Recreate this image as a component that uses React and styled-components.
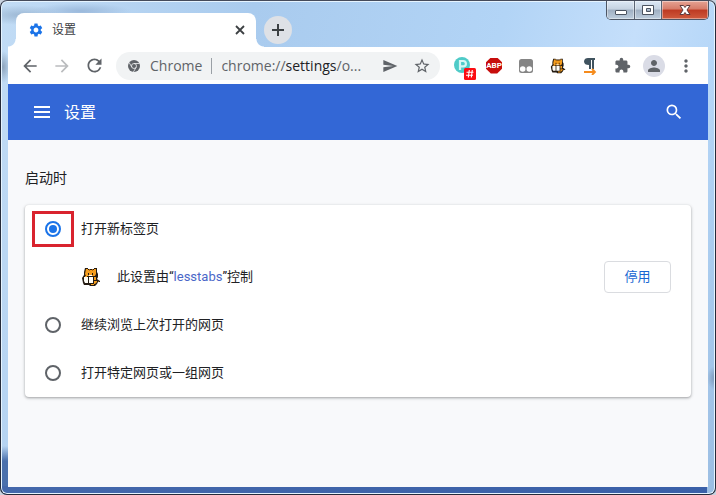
import React from 'react';
import styled, { createGlobalStyle } from 'styled-components';
import {
  MdArrowBack,
  MdArrowForward,
  MdExtension,
  MdMoreVert,
  MdPerson,
  MdRefresh,
  MdSearch,
  MdSend,
  MdSettings,
  MdStarBorder,
} from 'react-icons/md';

const uiFont = '"Roboto", "Noto Sans CJK SC", sans-serif';

const GlobalStyle = createGlobalStyle`
  *, *::before, *::after { box-sizing: border-box; }
  body { margin: 0; background: #c9d3e0; font-family: ${uiFont}; color: #202124; }
  button, input { font: inherit; margin: 0; }
  button { border: 0; padding: 0; background: none; color: inherit; }
  svg { display: block; flex: none; }
`;

const Frame = styled.div`
  position: relative;
  display: flex;
  flex-direction: column;
  min-height: 100vh;
  padding: 0 7px 7px 7px;
  border: 1px solid #252b3a;
  border-top-color: #454b5b;
  border-radius: 7px;
  box-shadow: inset 0 0 0 1px #e6f4ff;
  background:
    radial-gradient(ellipse 40px 10px at 20px 14px, #9db8d4 0%, transparent 100%),
    radial-gradient(ellipse 50px 8px at 80px 10px, #9bb9db 0%, transparent 100%),
    radial-gradient(ellipse 8px 16px at 2px 66px, #8fa5bd 0%, transparent 100%),
    radial-gradient(ellipse 8px 12px at 100% 377px, #7c97b8 0%, transparent 100%),
    linear-gradient(90deg, #4468ab, #3a60a8) 0 100% / calc(100% - 8px) 8px no-repeat,
    linear-gradient(180deg, transparent 0 445px, #4a70ac 460px) 0 0 / 8px 100% no-repeat,
    linear-gradient(105deg, #c2dcf5 0%, #a9cbee 30%, #b2d4f6 60%, #c5dffb 76%, #b6d7f8 86%, #9abde2 100%);
`;

const TabStrip = styled.div`
  display: flex;
  align-items: flex-end;
  height: 46px;
  padding: 0 8px;
`;

const Tab = styled.div`
  position: relative;
  display: flex;
  align-items: center;
  width: 240px;
  height: 34px;
  padding: 0 10px 0 12px;
  border-radius: 8px 8px 0 0;
  background: #fff;
  font-size: 12px;
  color: #3c4043;

  &::before, &::after {
    content: '';
    position: absolute;
    bottom: 0;
    width: 8px;
    height: 8px;
  }
  &::before {
    left: -8px;
    background: radial-gradient(circle at 0 0, transparent 7px, #fff 8px);
  }
  &::after {
    right: -8px;
    background: radial-gradient(circle at 100% 0, transparent 7px, #fff 8px);
  }
`;

const TabTitle = styled.span`
  flex: 1;
  padding-left: 8px;
  line-height: 18px;
`;

const IconButton = styled.button`
  display: flex;
  align-items: center;
  justify-content: center;
  flex: none;
  width: ${({ $size }) => $size || 32}px;
  height: ${({ $size }) => $size || 32}px;
  color: ${({ $color }) => $color || '#5f6368'};
`;

const NewTab = styled(IconButton)`
  margin: 0 0 3px 8px;
  border-radius: 50%;
  background: #dee1e6;
`;

const Caption = styled.div`
  position: absolute;
  top: 0;
  right: 6px;
  display: flex;
  border: 1px solid #4d5665;
  border-top: 0;
  border-radius: 0 0 5px 5px;
  overflow: hidden;
`;

const CaptionButton = styled.button`
  display: flex;
  align-items: center;
  justify-content: center;
  width: ${({ $close }) => ($close ? 47 : 27)}px;
  height: 18px;
  background: ${({ $close }) =>
    $close
      ? 'linear-gradient(#e5a394 0%, #d67b68 45%, #bd3a22 50%, #cf5a3d 100%)'
      : 'linear-gradient(#dce8f5 0%, #c5d2e1 45%, #9fafc2 50%, #bdcddd 100%)'};
  box-shadow: inset 0 0 0 1px #ffffff66;

  & + & { border-left: 1px solid #5a6474; }
`;

const Toolbar = styled.div`
  display: flex;
  align-items: center;
  height: 37px;
  padding: 0 6px;
  background: #fff;
`;

const Omnibox = styled.div`
  display: flex;
  align-items: center;
  flex: 1;
  min-width: 0;
  height: 28px;
  margin: 0 6px;
  padding: 0 2px 0 12px;
  border-radius: 14px;
  background: #f1f3f4;
  font-family: "Open Sans", "Noto Sans", sans-serif;
  font-size: 14px;
  line-height: 20px;
  color: #5f6368;
`;

const SiteName = styled.span`
  padding: 0 9px 0 10px;
`;

const Address = styled.span`
  flex: 1;
  min-width: 0;
  padding-left: 9px;
  border-left: 1px solid #9aa0a6;
  line-height: 16px;
  white-space: nowrap;

  b { font-weight: 400; color: #202124; }
`;

const Avatar = styled.span`
  display: flex;
  align-items: center;
  justify-content: center;
  width: 22px;
  height: 22px;
  border-radius: 50%;
  background: #dadce6;
`;

const Page = styled.div`
  flex: 1;
  display: flex;
  flex-direction: column;
  background: #f8f9fb;
`;

const Header = styled.header`
  display: flex;
  align-items: center;
  height: 56px;
  padding: 0 18px;
  background: #3367d6;
  color: #fff;
`;

const HeaderTitle = styled.h1`
  flex: 1;
  margin: 0;
  padding: 2px 0 0 6px;
  font-size: 16px;
  font-weight: 400;
  line-height: 24px;
`;

const Main = styled.main`
  padding: 28px 17px;
`;

const SectionTitle = styled.h2`
  margin: 0 0 17px;
  font-size: 14px;
  font-weight: 400;
  line-height: 20px;
`;

const Card = styled.section`
  border-radius: 4px;
  background: #fff;
  box-shadow: 0 1px 2px #3c40434d, 0 1px 3px 1px #3c404326;
  font-size: 13px;
  line-height: 20px;
`;

const Option = styled.label`
  position: relative;
  display: flex;
  align-items: center;
  gap: 20px;
  height: 48px;
  padding: 0 20px;
`;

const Radio = styled.input`
  appearance: none;
  display: grid;
  place-items: center;
  width: 16px;
  height: 16px;
  border: 2px solid #5f6368;
  border-radius: 50%;

  &:checked { border-color: #1a73e8; }
  &:checked::after {
    content: '';
    width: 8px;
    height: 8px;
    border-radius: 50%;
    background: #1a73e8;
  }
`;

const Highlight = styled.span`
  position: absolute;
  top: 6px;
  left: 7px;
  width: 42px;
  height: 36px;
  border: 3px solid #d9232e;
  pointer-events: none;
`;

const ControlledRow = styled.div`
  display: flex;
  align-items: center;
  gap: 16px;
  height: 48px;
  padding: 0 20px 0 56px;

  p { flex: 1; margin: 0; }
  a { color: #4a67c8; text-decoration: none; }
`;

const DisableButton = styled.button`
  min-width: 67px;
  height: 32px;
  padding: 0 16px;
  border: 1px solid #dadce0;
  border-radius: 4px;
  background: #fff;
  color: #1967d2;
`;

function MenuIcon() {
  return (
    <svg width="16" height="12" viewBox="0 0 16 12" fill="currentColor">
      <path d="M0 0h16v2H0zM0 5h16v2H0zM0 10h16v2H0z" />
    </svg>
  );
}

function CloseTabIcon() {
  return (
    <svg width="10" height="10" viewBox="0 0 10 10" stroke="currentColor" strokeWidth="1.800">
      <path d="M1 1l8 8M9 1l-8 8" />
    </svg>
  );
}

function PlusIcon() {
  return (
    <svg width="12" height="12" viewBox="0 0 12 12" fill="currentColor">
      <path d="M5 0h2v5h5v2H7v5H5V7H0V5h5z" />
    </svg>
  );
}

function ChromeIcon() {
  return (
    <svg width="12" height="12" viewBox="0 0 24 24">
      <circle cx="12" cy="12" r="12" fill="#5f6368" />
      <g fill="none" stroke="#f1f3f4" strokeWidth="1.600">
        <circle cx="12" cy="12" r="5" />
        <path d="M12 7h11M7.700 14.500L2.200 5M16.300 14.500L10.800 24" />
      </g>
    </svg>
  );
}

function CatIcon({ size = 16 }) {
  return (
    <svg width={size} height={size} viewBox="0 0 20 20">
      <path
        d="M4 1h3v1h6V1h3v4l1 2v3l-1 2 3 2v1h-2l-1 2-2 2H9l-1-1H3l-1-2-1-5 2-3V5z"
        fill="#241b12"
      />
      <path d="M5 2h2v1h6V2h2v5l-1 2H5L4 7z" fill="#f59d1d" />
      <path d="M7 6h1v2H7zM11 6h1v2h-1z" fill="#241b12" />
      <path d="M8 2h1v2H8zM11 2h1v2h-1z" fill="#b86d14" />
      <path d="M3 10h4v6H4l-1-2zM8 10h4v6H8z" fill="#fffdf6" />
      <path d="M8 8h3v1H8z" fill="#fff" />
      <path d="M13 10h2v3h-2zM13 14h3v1l-2 2h-1zM10 17h3v1h-3z" fill="#f59d1d" />
      <path d="M4 9h2v1H4z" fill="#f59d1d" />
      <path d="M17 14h1v1h-1z" fill="#8a5a1c" />
    </svg>
  );
}

function PinIcon() {
  return (
    <svg width="30" height="30" viewBox="0 0 30 30">
      <circle cx="15" cy="14" r="8" fill="#4fcbc8" />
      <path
        d="M13 19v-9h3.200a2.700 2.700 0 010 5.400H13"
        fill="none"
        stroke="#d5f7f4"
        strokeWidth="2.200"
      />
      <rect x="17" y="17" width="12" height="12" rx="1.500" fill="#fb0d12" />
      <path
        d="M22.300 19l-1 7.500M25.300 19l-1 7.500M19.500 21.300h7M19 24.300h7"
        stroke="#fff"
        strokeWidth="1.100"
      />
    </svg>
  );
}

const BlockerLabel = styled.span`
  display: grid;
  place-items: center;
  width: 16px;
  height: 16px;
  background: #c70d0c;
  clip-path: polygon(30% 0, 70% 0, 100% 30%, 100% 70%, 70% 100%, 30% 100%, 0 70%, 0 30%);
  color: #fff;
  font: 700 8px/16px "Roboto", sans-serif;
`;

function GoggleIcon() {
  return (
    <svg width="16" height="16" viewBox="0 0 16 16">
      <rect x="1" y="1" width="14" height="14" rx="2.500" fill="#858585" />
      <circle cx="4.700" cy="11" r="2.800" fill="#fff" />
      <circle cx="11.300" cy="11" r="2.800" fill="#fff" />
    </svg>
  );
}

function ParagraphIcon() {
  return (
    <svg width="16" height="18" viewBox="0 0 16 18">
      <path d="M6 1h7v2h-1v9h-2V3H9v9H7V8C4 8 2 7 2 4.500S4 1 6 1z" fill="#40535f" />
      <path d="M2 15h11M10 12l3 3-3 3" fill="none" stroke="#f58b1c" strokeWidth="1.800" />
    </svg>
  );
}

function MinimizeIcon() {
  return (
    <svg width="14" height="14" viewBox="0 0 14 14">
      <rect x="1.500" y="7.500" width="11" height="4" rx=".5" fill="#fff" stroke="#4b5360" />
    </svg>
  );
}

function MaximizeIcon() {
  return (
    <svg width="14" height="14" viewBox="0 0 14 14">
      <path
        d="M1.500 2.500h11v9h-11zM5.500 5.500v3h4v-3z"
        fill="#fff"
        fillRule="evenodd"
        stroke="#4b5360"
      />
    </svg>
  );
}

function CloseWindowIcon() {
  return (
    <svg width="14" height="14" viewBox="0 0 14 14">
      <path
        d="M2 2.500h3.500L7 4.500l1.500-2H12L9 7l3 4.500H8.500L7 9.500l-1.500 2H2L5 7z"
        fill="#fff"
        stroke="#5c3a3c"
      />
    </svg>
  );
}

export default function App() {
  return (
    <Frame>
      <GlobalStyle />
      <TabStrip>
        <Tab>
          <MdSettings size={16} color="#1a73e8" />
          <TabTitle>设置</TabTitle>
          <IconButton $size={12} $color="#3c4043" aria-label="关闭标签页">
            <CloseTabIcon />
          </IconButton>
        </Tab>
        <NewTab $size={28} $color="#3c4043" aria-label="新标签页">
          <PlusIcon />
        </NewTab>
      </TabStrip>
      <Caption>
        <CaptionButton aria-label="最小化"><MinimizeIcon /></CaptionButton>
        <CaptionButton aria-label="最大化"><MaximizeIcon /></CaptionButton>
        <CaptionButton $close aria-label="关闭"><CloseWindowIcon /></CaptionButton>
      </Caption>

      <Toolbar>
        <IconButton aria-label="后退"><MdArrowBack size={20} /></IconButton>
        <IconButton $color="#babcbe" aria-label="前进"><MdArrowForward size={20} /></IconButton>
        <IconButton aria-label="重新加载"><MdRefresh size={21} /></IconButton>
        <Omnibox>
          <ChromeIcon />
          <SiteName>Chrome</SiteName>
          <Address>chrome://<b>settings</b>/o...</Address>
          <IconButton aria-label="发送"><MdSend size={16} /></IconButton>
          <IconButton aria-label="收藏"><MdStarBorder size={18} /></IconButton>
        </Omnibox>
        <IconButton aria-label="Pin"><PinIcon /></IconButton>
        <IconButton aria-label="Adblock Plus"><BlockerLabel>ABP</BlockerLabel></IconButton>
        <IconButton aria-label="Tampermonkey"><GoggleIcon /></IconButton>
        <IconButton aria-label="lesstabs"><CatIcon /></IconButton>
        <IconButton aria-label="段落"><ParagraphIcon /></IconButton>
        <IconButton aria-label="扩展程序"><MdExtension size={17} /></IconButton>
        <IconButton aria-label="用户"><Avatar><MdPerson size={18} /></Avatar></IconButton>
        <IconButton aria-label="菜单"><MdMoreVert size={20} /></IconButton>
      </Toolbar>

      <Page>
        <Header>
          <IconButton $color="#fff" aria-label="主菜单"><MenuIcon /></IconButton>
          <HeaderTitle>设置</HeaderTitle>
          <IconButton $color="#fff" aria-label="搜索设置"><MdSearch size={20} /></IconButton>
        </Header>
        <Main>
          <SectionTitle>启动时</SectionTitle>
          <Card>
            <Option>
              <Radio type="radio" name="startup" defaultChecked />
              打开新标签页
              <Highlight />
            </Option>
            <ControlledRow>
              <CatIcon size={20} />
              <p>此设置由“<a href="#lesstabs">lesstabs</a>”控制</p>
              <DisableButton>停用</DisableButton>
            </ControlledRow>
            <Option>
              <Radio type="radio" name="startup" />
              继续浏览上次打开的网页
            </Option>
            <Option>
              <Radio type="radio" name="startup" />
              打开特定网页或一组网页
            </Option>
          </Card>
        </Main>
      </Page>
    </Frame>
  );
}
